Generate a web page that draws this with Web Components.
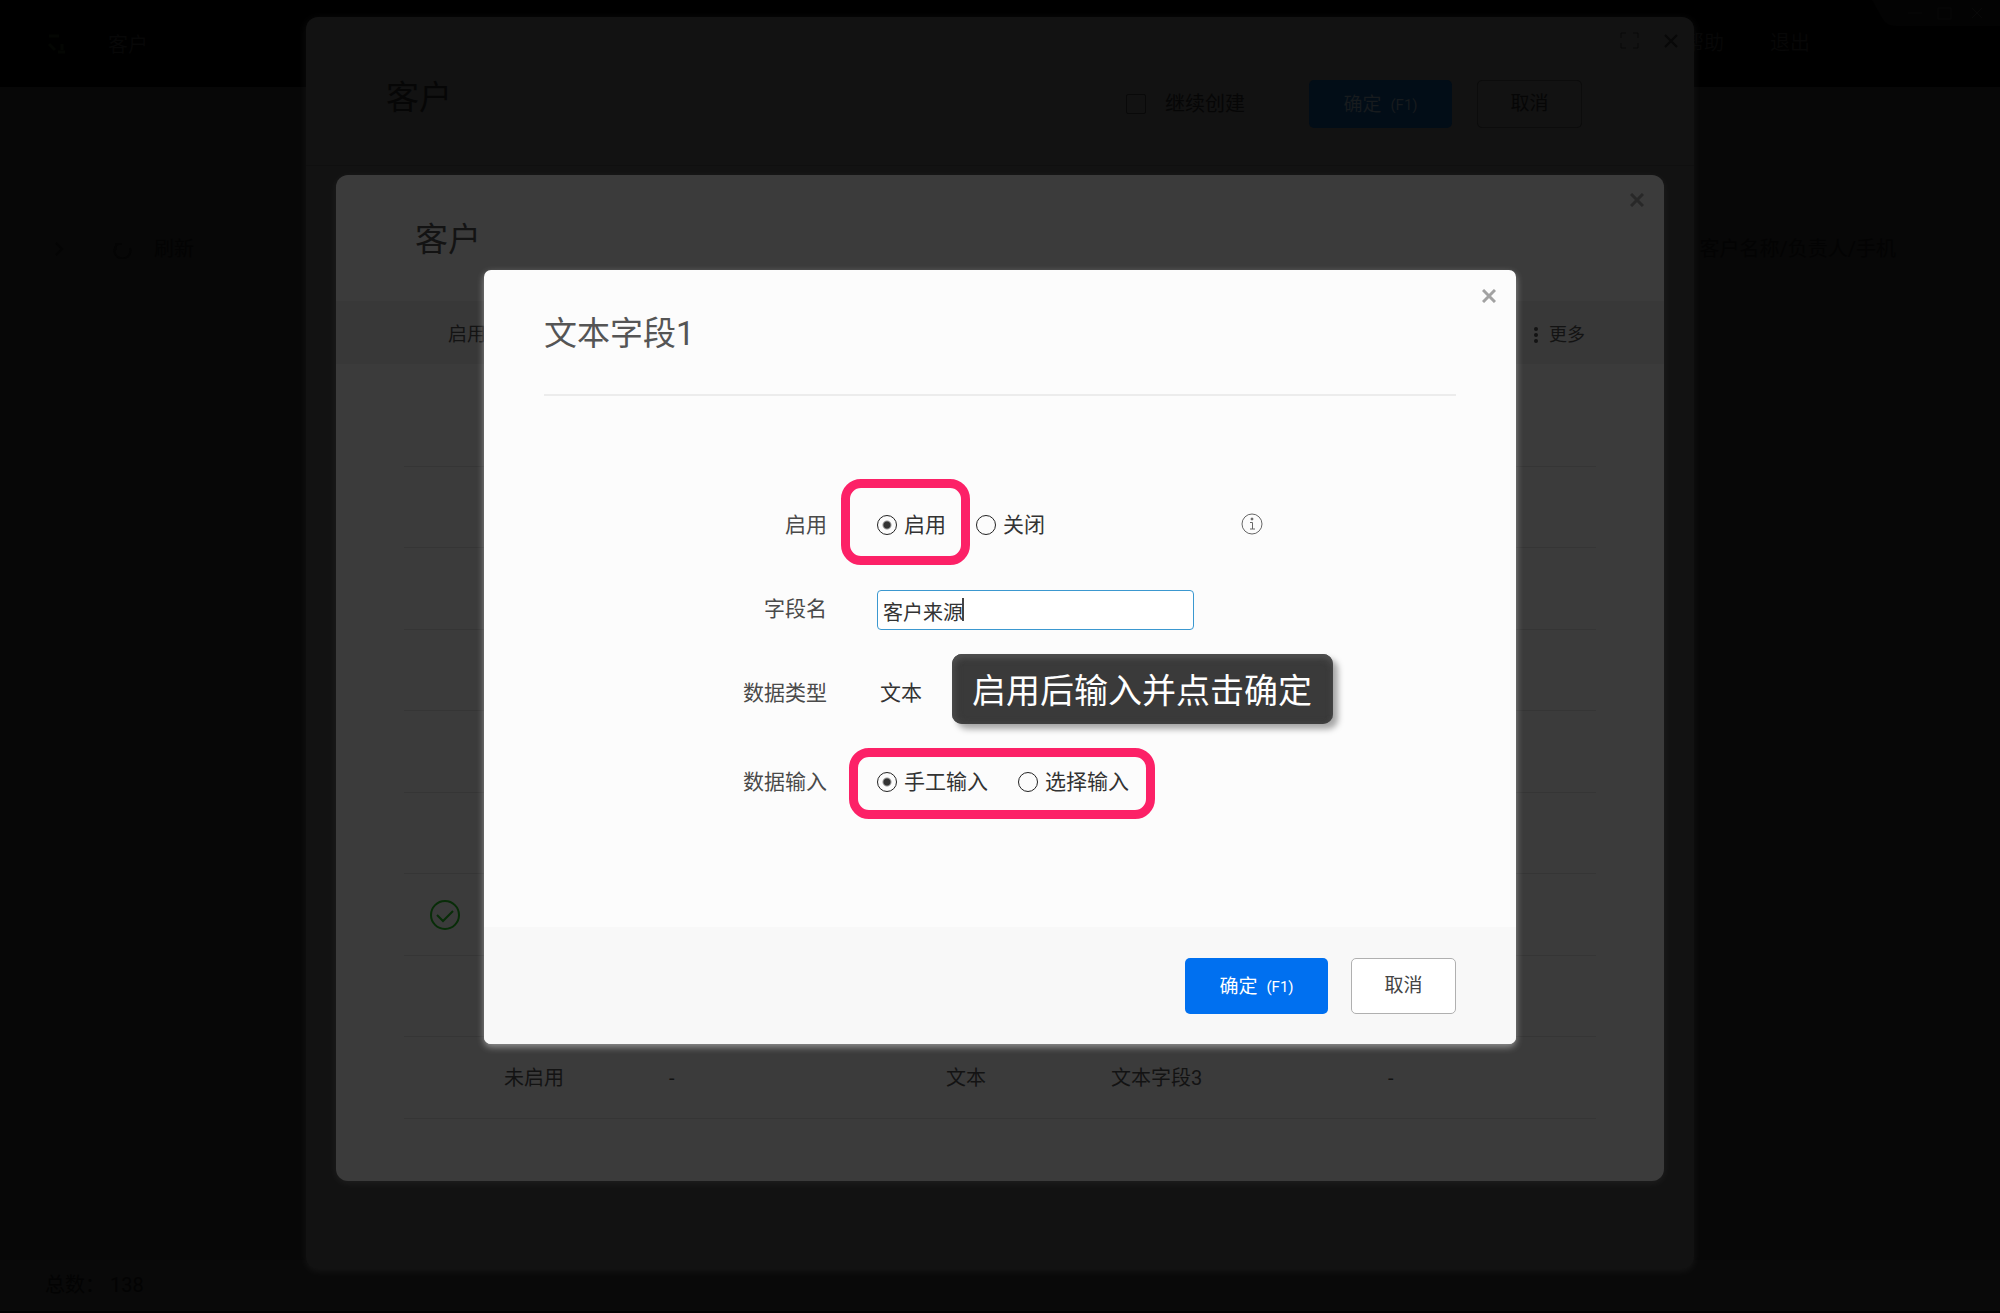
<!DOCTYPE html>
<html lang="zh-CN">
<head>
<meta charset="UTF-8">
<title>客户</title>
<style>
  html, body {
    height: 100%;
    margin: 0;
  }

  body {
    background: #070707;
    font-family: Roboto, "Noto Sans CJK SC", sans-serif;
  }

  .stage {
    display: grid;
    grid-template: minmax(100%, auto) / 100%;
    min-height: 100%;
  }

  .stage > * {
    grid-area: 1 / 1;
  }

  .outer {
    --panel-bg: #121212;
    --panel-fg: #060606;
    --close-fg: #080808;
    width: 69.4%;
    margin: 17px auto 44px;
  }

  .middle {
    --panel-bg: #3b3b3b;
    --panel-fg: #131313;
    --close-fg: #282828;
    width: 66.4%;
    margin: 175px auto 132px;
  }

  .inner {
    --panel-bg: #fcfcfc;
    --panel-fg: #555;
    --close-fg: #a2a2a2;
    --panel-radius: 7px;
    --panel-shadow: 0 3px 7px rgba(255, 255, 255, 0.45);
    width: 51.6%;
    margin: 0 auto;
    align-self: center;
  }
</style>
</head>
<body>
<div class="stage">
  <crm-shell></crm-shell>

  <modal-panel class="outer">
    <create-bar></create-bar>
  </modal-panel>

  <modal-panel class="middle">
    <field-table></field-table>
  </modal-panel>

  <modal-panel class="inner">
    <field-form></field-form>
  </modal-panel>
</div>

<script>
class CrmShell extends HTMLElement {
  constructor() {
    super();
    this.attachShadow({ mode: "open" });
    this.shadowRoot.innerHTML = `
      <style>
        :host {
          display: flex;
          flex-direction: column;
          color: #030303;
          font-size: 20px;
          line-height: 30px;
        }

        .top {
          display: flex;
          justify-content: space-between;
          height: 87px;
          background: #000;
          color: #070707;
        }

        .brand {
          display: flex;
          gap: 40px;
          padding: 30px 46px;
        }

        .menu {
          display: flex;
          gap: 46px;
          align-items: flex-start;
        }

        .menu span {
          padding-top: 28px;
        }

        .win {
          width: 128px;
          height: 26px;
          margin-left: 16px;
        }

        .tools {
          display: flex;
          justify-content: space-between;
          align-items: center;
          padding: 147px 104px 0 46px;
        }

        .tools div {
          display: flex;
          align-items: center;
          gap: 18px;
        }

        .foot {
          margin-top: auto;
          padding: 10px 45px 11px;
          background: #090909;
          border-bottom: 2px solid #000;
        }
      </style>
      <header class="top">
        <div class="brand">
          <svg width="22" height="28" viewBox="0 0 22 28" fill="none" stroke="#040603" stroke-width="3">
            <path d="M3 6h10M3 14l6 6M12 22h7M16 14v6"/>
          </svg>
          <span>客户</span>
        </div>
        <div class="menu">
          <span>帮助</span>
          <span>退出</span>
          <svg class="win" viewBox="0 0 128 26" fill="#030303" stroke="#080808">
            <path d="M0 0h128v26H24Q14 26 10 18Z" stroke="none"/>
            <path d="M36 13h14M66 8h13v11h-13zM100 8l10 10M110 8l-10 10" fill="none"/>
          </svg>
        </div>
      </header>
      <div class="tools">
        <div>
          <svg width="90" height="20" viewBox="0 0 90 20" fill="none" stroke="#040404" stroke-width="2">
            <path d="M10 4l6 6-6 6M72 5a8 8 0 1 0 12 4M76 5h-6v6"/>
          </svg>
          <span>刷新</span>
        </div>
        <span>客户名称/负责人/手机</span>
      </div>
      <footer class="foot">总数： 138</footer>
    `;
  }
}

class ModalPanel extends HTMLElement {
  constructor() {
    super();
    this.attachShadow({ mode: "open" });
    this.shadowRoot.innerHTML = `
      <style>
        :host {
          display: block;
          overflow: hidden;
          background: var(--panel-bg);
          color: var(--panel-fg);
          border-radius: var(--panel-radius, 12px);
          box-shadow: var(--panel-shadow, 0 2px 8px rgba(255, 255, 255, 0.06));
        }
      </style>
      <slot></slot>
    `;
  }
}

class CloseButton extends HTMLElement {
  constructor() {
    super();
    this.attachShadow({ mode: "open" });
    const thin = this.hasAttribute("thin");
    this.shadowRoot.innerHTML = `
      <style>
        :host {
          display: block;
        }

        button {
          display: block;
          padding: 0;
          border: 0;
          background: none;
        }

        svg {
          display: block;
        }
      </style>
      <button aria-label="关闭">
        <svg width="14" height="14" viewBox="0 0 14 14" stroke="var(--close-fg)" stroke-width="${thin ? 2 : 3}">
          <path d="M1 1l12 12M13 1L1 13"/>
        </svg>
      </button>
    `;
  }
}

class ActionButton extends HTMLElement {
  constructor() {
    super();
    this.attachShadow({ mode: "open" });
    this.shadowRoot.innerHTML = `
      <style>
        :host {
          display: block;
        }

        button {
          display: flex;
          align-items: center;
          justify-content: center;
          gap: 9px;
          box-sizing: border-box;
          width: 105px;
          height: var(--button-height, 56px);
          padding: 0;
          border: 1px solid var(--button-line, #b0b0b0);
          border-radius: 5px;
          background: var(--button-bg, #fff);
          color: var(--button-fg, #444);
          font: 19px/30px Roboto, "Noto Sans CJK SC", sans-serif;
        }

        :host([primary]) button {
          width: 143px;
          padding: 2px 0 0;
          border: 0;
          background: var(--primary-bg, #0070f0);
          color: var(--primary-fg, #fff);
        }

        ::slotted(small) {
          font-size: 15px;
        }
      </style>
      <button><slot></slot></button>
    `;
  }
}

class CreateBar extends HTMLElement {
  constructor() {
    super();
    this.attachShadow({ mode: "open" });
    this.shadowRoot.innerHTML = `
      <style>
        :host {
          display: block;
          --button-height: 48px;
          --button-bg: #121212;
          --button-line: #0c0c0c;
          --button-fg: #060606;
          --primary-bg: #020d17;
          --primary-fg: #171b1e;
        }

        .corner {
          display: flex;
          justify-content: flex-end;
          align-items: center;
          gap: 25px;
          padding: 15px 16px 0;
        }

        .bar {
          display: flex;
          align-items: center;
          padding: 29px 112px 35px 80px;
          border-bottom: 1px solid #0f0f0f;
        }

        h1 {
          margin: 0 auto 12px 0;
          font-size: 33px;
          line-height: 40px;
          font-weight: 400;
        }

        label {
          display: flex;
          align-items: center;
          gap: 19px;
          margin-right: 64px;
          font-size: 20px;
          line-height: 30px;
        }

        input {
          appearance: none;
          width: 20px;
          height: 20px;
          margin: 0;
          border: 1px solid #090909;
          border-radius: 2px;
        }

        action-button + action-button {
          margin-left: 25px;
        }
      </style>
      <div class="corner">
        <svg width="19" height="17" viewBox="0 0 19 17" fill="none" stroke="#080808">
          <path d="M1 6V1h5M13 1h5v5M18 11v5h-5M6 16H1v-5"/>
        </svg>
        <close-button thin></close-button>
      </div>
      <div class="bar">
        <h1>客户</h1>
        <label><input type="checkbox">继续创建</label>
        <action-button primary>确定<small>(F1)</small></action-button>
        <action-button>取消</action-button>
      </div>
    `;
  }
}

class FieldTable extends HTMLElement {
  constructor() {
    super();
    this.attachShadow({ mode: "open" });

    const check = `
      <svg width="30" height="30" viewBox="0 0 30 30" fill="none" stroke="#082d08" stroke-width="2">
        <circle cx="15" cy="15" r="14"/>
        <path d="M7 15l6 6 10-10"/>
      </svg>
    `;
    const rows = [
      [], [], [], [], [], [],
      [check],
      [],
      ["", "未启用", "-", "文本", "文本字段3", "-"],
    ];
    const body = rows.map((row) => {
      const cells = [0, 1, 2, 3, 4, 5].map((i) => `<td>${row[i] || ""}</td>`);
      return `<tr>${cells.join("")}</tr>`;
    });

    this.shadowRoot.innerHTML = `
      <style>
        :host {
          display: block;
        }

        .corner {
          display: flex;
          justify-content: flex-end;
          padding: 18px 20px 0;
        }

        h2 {
          margin: 12px 79px 40px;
          font-size: 33px;
          line-height: 42px;
          font-weight: 400;
        }

        .band {
          display: flex;
          justify-content: space-between;
          align-items: center;
          box-sizing: border-box;
          height: 63px;
          padding: 4px 79px 0 112px;
          background: #383838;
          font-size: 19px;
          line-height: 30px;
        }

        .band button {
          display: flex;
          align-items: center;
          gap: 10px;
          padding: 0;
          border: 0;
          background: none;
          color: inherit;
          font: inherit;
          font-size: 18px;
        }

        .list {
          overflow: hidden;
          padding: 0 68px;
        }

        table {
          width: 100%;
          margin-top: 21px;
          border-collapse: collapse;
          table-layout: fixed;
          font-size: 20px;
          line-height: 30px;
        }

        td {
          height: 80px;
          padding: 0;
          border-bottom: 1px solid #353535;
        }

        tr:nth-child(odd) td {
          height: 81px;
        }

        td:first-child {
          padding-left: 26px;
        }

        td svg {
          display: block;
        }
      </style>
      <div class="corner"><close-button></close-button></div>
      <h2>客户</h2>
      <div class="band">
        <span>启用</span>
        <button>
          <svg width="6" height="18" viewBox="0 0 6 18" fill="currentColor">
            <circle cx="3" cy="3" r="2"/><circle cx="3" cy="9" r="2"/><circle cx="3" cy="15" r="2"/>
          </svg>
          更多
        </button>
      </div>
      <div class="list">
        <table>
          <colgroup>
            <col style="width: 100px"><col style="width: 165px"><col style="width: 277px">
            <col style="width: 165px"><col style="width: 277px"><col>
          </colgroup>
          <tbody>${body.join("")}</tbody>
        </table>
      </div>
    `;
  }
}

class RadioSet extends HTMLElement {
  constructor() {
    super();
    this.attachShadow({ mode: "open" });
  }

  connectedCallback() {
    const name = this.getAttribute("name");
    const options = this.getAttribute("options").split(",");
    const items = options.map((text, i) => `
      <label><input type="radio" name="${name}" ${i === 0 ? "checked" : ""}>${text}</label>
    `);

    this.shadowRoot.innerHTML = `
      <style>
        :host {
          display: flex;
          gap: 30px;
        }

        label {
          display: flex;
          align-items: center;
          gap: 7px;
          color: #333;
          font-size: 21px;
          line-height: 30px;
        }

        input {
          appearance: none;
          box-sizing: border-box;
          width: 20px;
          height: 20px;
          margin: 0;
          border: 1px solid #222;
          border-radius: 50%;
        }

        input:checked {
          background: radial-gradient(circle, #333 3px, transparent 5px);
        }
      </style>
      ${items.join("")}
    `;
  }
}

class FormRow extends HTMLElement {
  constructor() {
    super();
    this.attachShadow({ mode: "open" });
    this.shadowRoot.innerHTML = `
      <style>
        :host {
          display: grid;
          grid-template-columns: 343fr 639fr;
          column-gap: 50px;
          align-items: center;
          height: 84px;
          color: #4a4a4a;
          font-size: 21px;
          line-height: 30px;
        }

        :host([tall]) {
          height: 94px;
        }

        .label {
          text-align: right;
        }

        .value {
          display: flex;
          align-items: center;
          position: relative;
        }
      </style>
      <div class="label"><slot name="label"></slot></div>
      <div class="value"><slot></slot></div>
    `;
  }
}

// Rounded outline that floats around the options it points at
class RingMark extends HTMLElement {
  constructor() {
    super();
    this.attachShadow({ mode: "open" });
    this.shadowRoot.innerHTML = `
      <style>
        :host {
          position: absolute;
          box-sizing: border-box;
          border: 9px solid #fc2167;
          border-radius: 20px;
          pointer-events: none;
        }
      </style>
    `;
  }
}

class HintCallout extends HTMLElement {
  constructor() {
    super();
    this.attachShadow({ mode: "open" });
    this.shadowRoot.innerHTML = `
      <style>
        :host {
          position: absolute;
          padding: 12px 21px 8px 20px;
          border-radius: 10px;
          background: #3a3a3a;
          box-shadow: inset 0 4px 6px #505050, inset 4px 0 6px #444, 5px 5px 6px rgba(0, 0, 0, 0.35);
          color: #fff;
          font-size: 34px;
          line-height: 50px;
          white-space: nowrap;
        }
      </style>
      <slot></slot>
    `;
  }
}

class FieldForm extends HTMLElement {
  constructor() {
    super();
    this.attachShadow({ mode: "open" });
    this.shadowRoot.innerHTML = `
      <style>
        :host {
          display: block;
        }

        .corner {
          display: flex;
          justify-content: flex-end;
          padding: 19px 20px 0;
        }

        h2 {
          margin: 10px 60px 0;
          padding-bottom: 39px;
          border-bottom: 2px solid #ececec;
          font-size: 33px;
          line-height: 42px;
          font-weight: 400;
        }

        form {
          padding: 87px 0 98px;
        }

        input {
          box-sizing: border-box;
          width: 317px;
          height: 40px;
          margin: 3px 0 0;
          padding: 3px 5px 0;
          border: 1px solid #3b98d0;
          border-radius: 4px;
          background: linear-gradient(#444, #444) 84px 7px / 2px 23px no-repeat #fff;
          color: #333;
          font: 20px/30px Roboto, "Noto Sans CJK SC", sans-serif;
        }

        .type {
          padding-left: 3px;
          color: #333;
        }

        .info {
          margin: 0 0 2px 195px;
        }

        .ring-state {
          inset: -31px auto -25px -36px;
          width: 129px;
        }

        .ring-input {
          inset: -19px auto -22px -28px;
          width: 306px;
        }

        hint-callout {
          left: 75px;
          top: -24px;
        }

        footer {
          display: flex;
          justify-content: flex-end;
          gap: 23px;
          padding: 31px 60px 30px;
          background: #f8f8f8;
        }
      </style>
      <div class="corner"><close-button></close-button></div>
      <h2>文本字段1</h2>
      <form>
        <form-row>
          <span slot="label">启用</span>
          <radio-set name="state" options="启用,关闭"></radio-set>
          <svg class="info" width="24" height="24" viewBox="0 0 24 24" fill="none" stroke="#666">
            <circle cx="12" cy="12" r="10"/>
            <circle cx="12" cy="7" r="1" fill="#666"/>
            <path d="M10 10.5h2.5V17M10 17h5"/>
          </svg>
          <ring-mark class="ring-state"></ring-mark>
        </form-row>
        <form-row>
          <label slot="label" for="field-name">字段名</label>
          <input id="field-name" type="text" value="客户来源">
        </form-row>
        <form-row>
          <span slot="label">数据类型</span>
          <span class="type">文本</span>
          <hint-callout>启用后输入并点击确定</hint-callout>
        </form-row>
        <form-row tall>
          <span slot="label">数据输入</span>
          <radio-set name="entry" options="手工输入,选择输入"></radio-set>
          <ring-mark class="ring-input"></ring-mark>
        </form-row>
      </form>
      <footer>
        <action-button primary>确定<small>(F1)</small></action-button>
        <action-button>取消</action-button>
      </footer>
    `;
  }
}

customElements.define("crm-shell", CrmShell);
customElements.define("modal-panel", ModalPanel);
customElements.define("close-button", CloseButton);
customElements.define("action-button", ActionButton);
customElements.define("create-bar", CreateBar);
customElements.define("field-table", FieldTable);
customElements.define("radio-set", RadioSet);
customElements.define("form-row", FormRow);
customElements.define("ring-mark", RingMark);
customElements.define("hint-callout", HintCallout);
customElements.define("field-form", FieldForm);
</script>
</body>
</html>
